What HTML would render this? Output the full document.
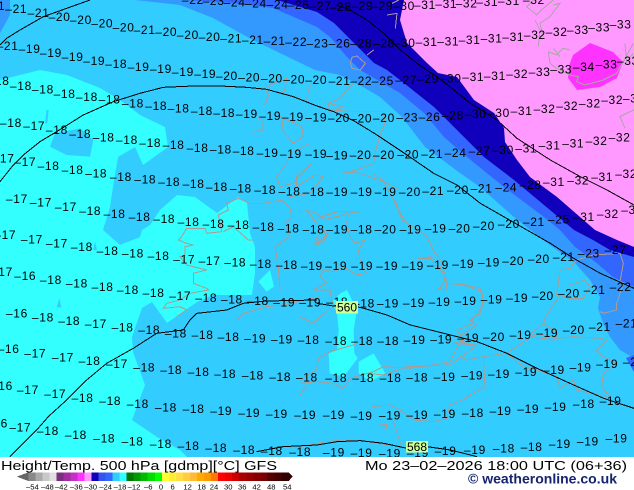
<!DOCTYPE html>
<html><head><meta charset="utf-8"><title>Height/Temp. 500 hPa</title>
<style>
html,body{margin:0;padding:0;background:#fff;width:634px;height:490px;overflow:hidden}
svg{display:block;position:absolute;left:0;top:0}
text{font-family:"Liberation Sans",sans-serif;fill:#000}
.l text{font-size:36px;letter-spacing:2px}
.c polyline{fill:none;stroke:#aa9c94;stroke-width:3}
.p polyline{fill:none;stroke:#aaa6a6;stroke-width:3}
.k polyline{fill:none;stroke:#000;stroke-width:3}
</style></head>
<body>
<svg width="634" height="490" viewBox="0 0 634 490" xmlns="http://www.w3.org/2000/svg">
<defs><clipPath id="m"><rect x="0" y="0" width="634" height="457"/></clipPath></defs>
<g clip-path="url(#m)">
<rect width="634" height="457" fill="#33ccff"/>
<!-- cyan -->
<polygon fill="#33ffff" points="0,80 40,70 67,75 100,88 120,100 140,115 165,127 168,147 143,165 135,147 118,157 113,187 110,207 103,230 120,245 140,237 142,230 150,225 160,210 177,195 195,197 217,213 238,197 247,203 250,233 255,247 255,273 252,295 213,295 197,302 167,323 152,302 142,308 132,337 133,352 145,385 132,420 157,437 180,450 187,457 0,457"/>
<g transform="scale(.3333)" fill="#33ccff">
<polygon points="150,440 165,400 240,385 280,420 270,470 200,465"/>
<polygon points="135,370 140,330 146,330 142,370"/>
</g>
<g transform="translate(0,230) scale(.3333)" fill="#33ccff">
<polygon points="170,232 178,205 184,232"/>
<polygon points="280,60 285,35 291,60"/>
</g>
<g transform="translate(0,230) scale(.3333)"><polygon fill="#33ffff" points="775,155 810,120 822,170 800,185"/></g>
<g transform="translate(317,230) scale(.3333)" fill="#33ffff">
<polygon points="45,215 70,190 90,180 120,240 110,300 112,370 122,385 80,440 38,430 35,370 60,360 65,300 60,250"/>
<polygon points="125,395 170,370 205,430 160,455 125,430"/>
</g>
<!-- blue bands -->
<polygon fill="#3399ff" points="135,0 180,5 213,18 253,40 315,70 340,75 363,87 380,97 402,117 425,147 460,173 480,187 514,217 543,240 575,263 590,280 600,297 598,308 603,323 610,337 620,350 634,358 634,0"/>
<polygon fill="#3399ff" points="0,0 10,0 10,15 0,33"/>
<polygon fill="#3366ff" points="187,0 233,3 273,8 317,27 330,37 347,57 360,70 400,93 424,113 444,137 467,157 504,187 544,217 560,230 575,247 593,260 613,277 634,287 634,0"/>
<polygon fill="#3366ff" points="634,355 626,358 634,372"/>
<polygon fill="#1100bb" points="277,0 317,12 334,23 354,43 374,63 387,70 400,80 434,107 457,130 484,157 514,180 550,210 574,230 593,240 610,250 634,257 634,0"/>
<polygon fill="#ff99ff" points="404,0 400,20 407,43 427,63 438,73 457,77 474,100 494,113 504,128 505,142 517,160 530,177 557,197 595,230 617,240 634,247 634,0"/>
<polygon fill="#ff33ff" points="570,63 573,55 590,43 613,52 623,62 617,78 600,87 577,90 568,78"/>

<!-- coastlines -->
<g shape-rendering="crispEdges">
<g class="c" transform="translate(230,70) scale(.3333)">
<polyline points="105,105 115,75 105,55 130,40 170,25 165,60 155,70 200,85 230,90 235,60 245,40"/>
<polyline points="300,130 295,100 330,85 350,60 370,40"/>
<polyline points="305,120 370,125 460,125 465,160 450,195 440,230 430,280 380,300 340,310"/>
<polyline points="430,310 470,340 510,360"/>
<polyline points="85,145 100,150 98,180 85,180 72,190"/>
<polyline points="150,140 215,170 220,200 190,220 160,185 155,140"/>
<polyline points="240,220 180,250 170,280 140,320 150,350 190,340 245,280"/>
<polyline points="245,280 200,320 200,350 255,315 280,320 240,370 180,380"/>
</g>
<g class="c" transform="translate(150,190) scale(.3333)">
<polyline points="205,75 235,60 230,40 265,25 300,40 340,40 395,30 420,55 425,80 405,100 420,140 390,160 375,170 385,230 390,300"/>
<polyline points="205,75 215,125 170,130 165,115 110,115 95,140 85,150 110,160 130,165 105,170 105,195 90,200 110,225 170,240 130,250 130,280 170,295 175,300 120,310 90,330 50,340 40,355 90,350 110,360 80,380"/>
<polyline points="220,125 250,110 295,150 310,150"/>
<polyline points="470,60 500,100"/>
<polyline points="490,160 510,130"/>
<polyline points="260,390 280,370 350,350 400,345 510,320"/>
</g>
<g class="c" transform="translate(300,200) scale(.3333)">
<polyline points="15,30 50,40 70,60 130,45 140,35 180,35 145,40 140,70 150,110 165,130 195,120 175,150 180,180 200,220 170,225 130,200 100,215 70,210 60,230 80,250 40,270 90,270 95,300 105,320"/>
<polyline points="45,130 85,100 70,125 50,135 45,130"/>
<polyline points="285,0 295,30 320,70 350,85 380,110 405,160 430,190 420,200 435,240 420,265"/>
<polyline points="355,175 395,170 405,180"/>
<polyline points="0,350 40,370 90,325"/>
</g>
<g class="c" transform="translate(317,230) scale(.3333)">
<polyline points="390,160 440,165 495,185 500,225 465,270 470,280 420,300 440,330 410,340 480,345 400,405 270,410 200,435 150,430"/>
<polyline points="300,85 340,85 360,110 385,130 390,180 360,175"/>
<polyline points="0,40 30,20 20,0"/>
</g>
<g class="c" transform="translate(300,325) scale(.3333)">
<polyline points="0,165 50,135 55,100 90,80 160,60 170,55"/>
<polyline points="0,175 50,170 100,175 130,190 150,160 220,140 250,125 330,130 400,120 450,110 480,50 510,60"/>
<polyline points="0,210 20,180"/>
<polyline points="240,300 262,298 258,310 242,306"/>
<polyline points="215,245 270,240 300,255 280,290 305,365"/>
<polyline points="300,255 340,285 400,290 440,280 450,240 510,215"/>
<polyline points="0,365 80,350 130,345 200,350 300,365"/>
</g>
<g class="c" transform="translate(460,240) scale(.3333)">
<polyline points="0,130 60,145 70,180 60,220 30,240 50,255 0,290"/>
<polyline points="290,165 300,90 330,85 350,60 400,45 480,40 490,70 480,125 490,130 470,190 470,210 430,220 420,215"/>
<polyline points="330,135 375,120 390,140 370,175 330,175 300,165"/>
<polyline points="250,250 260,225 300,165"/>
<polyline points="210,285 250,250 295,280 280,300 215,290"/>
<polyline points="0,350 20,360 70,350 140,340 200,300 230,280 290,295 340,290 420,295 440,300 410,330 430,350 470,370 430,400 425,440 450,470"/>
<polyline points="140,340 190,380 230,390 290,410 300,445 340,420 350,450 440,470"/>
<polyline points="70,350 75,440 20,470"/>
<polyline points="0,300 15,310 30,300"/>
</g>
<g class="c" transform="translate(317,0) scale(.3333)">
<polyline points="100,190 105,172 120,168 145,190 130,210 105,205 100,190"/>
<polyline points="150,165 170,150"/>
<polyline points="210,45 240,40 235,85"/>
<polyline points="225,10 245,0"/>
<polyline points="35,310 75,320 40,335"/>
<polyline points="75,515 130,520 200,545 235,610 260,670"/>
<polyline points="0,655 60,635 130,635"/>
</g>
<g class="p" transform="translate(470,0) scale(.3333)">
<polyline points="190,0 170,20 200,45 220,25 250,0"/>
<polyline points="195,60 210,90 205,140"/>
<polyline points="250,15 270,10 240,50 210,70 220,110"/>
<polyline points="235,155 240,190 260,205 300,225 325,230 320,245 345,255 400,240 440,220 460,185 490,130"/>
<polyline points="235,155 260,165 280,145 300,150"/>
<polyline points="250,145 270,170"/>
<polyline points="465,385 450,350 480,335 492,330"/>
<polyline points="465,130 470,185 490,160"/>
</g>
</g>

<!-- contours -->
<g shape-rendering="crispEdges">
<g class="k" transform="scale(.3333)">
<polyline points="0,135 20,115 60,90 130,50 200,25 270,0"/>
<polyline points="0,545 40,495 70,465 120,425 170,395 250,345 340,305 420,280 490,262 580,258 660,258 740,262 800,268 880,290 951,318"/>
</g>
<g class="k" transform="translate(317,0) scale(.3333)">
<polyline points="0,318 50,335 110,362 180,405 270,465 350,520 420,555 490,610 560,650 630,690"/>
<polyline points="55,15 90,25 150,60 200,100 250,150 300,190 380,245 460,310 540,360 600,415 700,480 790,530 870,570 951,615"/>
</g>
<g class="k" transform="translate(317,230) scale(.3333)">
<polyline points="630,0 700,40 770,85 850,130 951,175"/>
<polyline points="0,220 50,228 130,232 210,255 280,285 420,320 480,335 570,370 660,415 770,465 860,505 951,535"/>
<polyline points="0,645 60,635 130,632 200,640 270,655 330,650 400,660 480,680"/>
</g>
<g class="k" transform="translate(0,230) scale(.3333)">
<polyline points="30,680 110,600 145,560 200,510 260,450 320,400 400,355 470,310 550,300 570,270 590,250 680,240 730,220 800,213 951,210"/>
<polyline points="770,665 850,650 951,645"/>
</g>
</g>

<!-- temperature labels -->
<g class="l" transform="translate(-7.4,4.2) scale(.3333)">
<text x="568" y="0">–22</text><text x="630" y="3">–23</text><text x="693" y="7">–24</text><text x="757" y="10">–24</text><text x="822" y="13">–24</text><text x="885" y="15">–26</text>
<text x="-28" y="17">–21</text><text x="38" y="27">–21</text><text x="105" y="38">–21</text><text x="168" y="50">–20</text><text x="232" y="60">–20</text><text x="296" y="70">–20</text><text x="360" y="82">–20</text><text x="423" y="90">–21</text><text x="488" y="95">–20</text><text x="553" y="105">–20</text><text x="618" y="110">–20</text><text x="683" y="115">–21</text><text x="748" y="120">–21</text><text x="813" y="122">–21</text><text x="878" y="125">–22</text><text x="942" y="130">–23</text>
<text x="12" y="138">–21</text><text x="78" y="147">–19</text><text x="142" y="158">–19</text><text x="207" y="170">–19</text><text x="272" y="182">–19</text><text x="338" y="192">–18</text><text x="405" y="200">–19</text><text x="472" y="207">–19</text><text x="538" y="215">–19</text><text x="605" y="222">–19</text><text x="670" y="228">–20</text><text x="737" y="232">–20</text><text x="805" y="235">–20</text><text x="872" y="238">–20</text><text x="938" y="240">–20</text>
<text x="-15" y="243">–18</text><text x="52" y="257">–18</text><text x="118" y="268">–18</text><text x="183" y="282">–18</text><text x="250" y="290">–18</text><text x="318" y="298">–18</text><text x="388" y="310">–18</text><text x="458" y="318">–18</text><text x="525" y="325">–18</text><text x="595" y="333">–18</text><text x="662" y="338">–18</text><text x="730" y="342">–19</text><text x="800" y="347">–19</text><text x="868" y="350">–19</text><text x="938" y="352">–19</text>
<text x="22" y="368">–18</text><text x="92" y="378">–17</text><text x="160" y="390">–18</text><text x="230" y="402">–18</text><text x="300" y="412">–18</text><text x="370" y="420">–18</text><text x="440" y="428">–18</text><text x="510" y="435">–18</text><text x="582" y="443">–18</text><text x="652" y="448">–18</text><text x="720" y="452">–18</text><text x="792" y="458">–19</text><text x="862" y="462">–19</text><text x="938" y="462">–19</text>
<text x="0" y="475">–17</text><text x="65" y="485">–17</text><text x="135" y="498">–18</text><text x="207" y="510">–18</text><text x="278" y="520">–18</text><text x="352" y="530">–18</text><text x="425" y="538">–18</text><text x="497" y="545">–18</text><text x="570" y="552">–18</text><text x="640" y="560">–18</text><text x="712" y="565">–18</text><text x="785" y="570">–18</text><text x="858" y="574">–18</text><text x="930" y="575">–18</text>
<text x="40" y="597">–17</text><text x="112" y="607">–17</text><text x="187" y="620">–17</text><text x="260" y="632">–18</text><text x="333" y="642">–18</text><text x="408" y="650">–18</text><text x="482" y="657">–18</text><text x="555" y="665">–18</text><text x="630" y="672">–18</text><text x="705" y="675">–18</text><text x="780" y="680">–18</text><text x="855" y="685">–18</text><text x="930" y="688">–18</text>
</g>
<g class="l" transform="translate(309.6,4.2) scale(.3333)">
<text x="0" y="18">–27</text><text x="60" y="20">–28</text><text x="125" y="18">–29</text><text x="185" y="17">–29</text><text x="250" y="17">–30</text><text x="313" y="15">–31</text><text x="377" y="12">–31</text><text x="438" y="10">–32</text><text x="500" y="5">–31</text><text x="565" y="3">–31</text><text x="640" y="0">–32</text>
<text x="57" y="130">–26</text><text x="122" y="130">–28</text><text x="190" y="130">–28</text><text x="252" y="128">–30</text><text x="318" y="125">–31</text><text x="383" y="124">–31</text><text x="447" y="120">–31</text><text x="513" y="115">–31</text><text x="578" y="110">–31</text><text x="643" y="105">–32</text><text x="708" y="95">–32</text><text x="772" y="90">–33</text><text x="836" y="82">–33</text><text x="900" y="73">–33</text>
<text x="57" y="242">–21</text><text x="122" y="243">–22</text><text x="187" y="243">–25</text><text x="257" y="240">–27</text><text x="322" y="237">–29</text><text x="390" y="235">–30</text><text x="458" y="230">–31</text><text x="523" y="228">–31</text><text x="590" y="222">–32</text><text x="657" y="216">–33</text><text x="722" y="208">–33</text><text x="790" y="201">–34</text><text x="858" y="193">–33</text><text x="922" y="182">–33</text>
<text x="55" y="353">–20</text><text x="122" y="355">–20</text><text x="190" y="353">–20</text><text x="260" y="352">–23</text><text x="327" y="350">–26</text><text x="397" y="346">–28</text><text x="465" y="342">–30</text><text x="535" y="338">–30</text><text x="603" y="333">–31</text><text x="672" y="327">–32</text><text x="740" y="318">–32</text><text x="808" y="310">–32</text><text x="875" y="300">–32</text><text x="940" y="295">–32</text>
<text x="50" y="466">–19</text><text x="120" y="465">–20</text><text x="190" y="465">–20</text><text x="263" y="463">–20</text><text x="335" y="462">–21</text><text x="405" y="458">–24</text><text x="477" y="453">–27</text><text x="547" y="450">–30</text><text x="617" y="445">–31</text><text x="687" y="436">–31</text><text x="758" y="430">–31</text><text x="828" y="422">–32</text><text x="897" y="412">–32</text>
<text x="50" y="576">–19</text><text x="123" y="576">–19</text><text x="195" y="576">–19</text><text x="268" y="575">–20</text><text x="338" y="573">–21</text><text x="412" y="570">–20</text><text x="483" y="565">–21</text><text x="557" y="562">–24</text><text x="630" y="555">–28</text><text x="700" y="545">–31</text><text x="773" y="541">–32</text><text x="845" y="530">–31</text><text x="917" y="522">–32</text>
<text x="50" y="688">–19</text><text x="123" y="688">–18</text><text x="195" y="688">–20</text><text x="270" y="688">–19</text><text x="345" y="685">–19</text><text x="417" y="685">–20</text><text x="490" y="677">–20</text><text x="565" y="672">–20</text><text x="640" y="665">–21</text><text x="715" y="658">–25</text><text x="790" y="650">–31</text><text x="862" y="642">–32</text><text x="935" y="630">–32</text>
</g>
<g class="l" transform="translate(-7.4,234.2) scale(.3333)">
<text x="5" y="15">–17</text><text x="85" y="28">–17</text><text x="160" y="40">–17</text><text x="235" y="50">–18</text><text x="312" y="62">–18</text><text x="388" y="70">–18</text><text x="465" y="78">–18</text><text x="542" y="88">–17</text><text x="618" y="93">–17</text><text x="695" y="97">–18</text><text x="772" y="101">–18</text><text x="850" y="105">–18</text><text x="925" y="108">–19</text>
<text x="-5" y="125">–17</text><text x="65" y="138">–16</text><text x="142" y="150">–18</text><text x="220" y="160">–18</text><text x="297" y="170">–18</text><text x="373" y="180">–18</text><text x="450" y="188">–18</text><text x="530" y="197">–17</text><text x="608" y="204">–18</text><text x="685" y="208">–18</text><text x="763" y="212">–18</text><text x="842" y="217">–19</text><text x="920" y="217">–19</text>
<text x="40" y="250">–16</text><text x="118" y="262">–18</text><text x="197" y="272">–18</text><text x="277" y="282">–17</text><text x="357" y="292">–18</text><text x="437" y="300">–18</text><text x="517" y="310">–18</text><text x="597" y="315">–18</text><text x="675" y="320">–18</text><text x="755" y="325">–19</text><text x="835" y="328">–19</text><text x="915" y="330">–18</text>
<text x="15" y="357">–16</text><text x="95" y="370">–17</text><text x="178" y="382">–17</text><text x="258" y="393">–18</text><text x="340" y="402">–17</text><text x="422" y="412">–18</text><text x="503" y="420">–18</text><text x="585" y="425">–18</text><text x="665" y="431">–18</text><text x="748" y="436">–18</text><text x="830" y="440">–18</text><text x="910" y="442">–18</text>
<text x="-5" y="468">–16</text><text x="73" y="480">–17</text><text x="155" y="492">–17</text><text x="237" y="503">–18</text><text x="320" y="512">–18</text><text x="403" y="522">–18</text><text x="487" y="532">–18</text><text x="570" y="537">–18</text><text x="653" y="543">–19</text><text x="737" y="548">–19</text><text x="820" y="551">–19</text><text x="905" y="554">–19</text>
<text x="-20" y="580">–16</text><text x="50" y="592">–17</text><text x="133" y="603">–18</text><text x="217" y="614">–18</text><text x="302" y="625">–18</text><text x="387" y="634">–18</text><text x="472" y="642">–18</text><text x="555" y="648">–18</text><text x="638" y="654">–18</text><text x="722" y="660">–18</text><text x="805" y="663">–18</text><text x="890" y="665">–18</text>
</g>
<g class="l" transform="translate(309.6,234.2) scale(.3333)">
<text x="47" y="108">–19</text><text x="125" y="108">–19</text><text x="200" y="108">–19</text><text x="277" y="108">–19</text><text x="352" y="105">–19</text><text x="428" y="102">–19</text><text x="505" y="97">–19</text><text x="578" y="92">–20</text><text x="655" y="87">–20</text><text x="730" y="80">–21</text><text x="805" y="70">–23</text><text x="885" y="60">–27</text>
<text x="50" y="215">–18</text><text x="130" y="220">–18</text><text x="202" y="220">–19</text><text x="280" y="218">–19</text><text x="357" y="215">–19</text><text x="435" y="212">–19</text><text x="513" y="208">–19</text><text x="590" y="203">–19</text><text x="667" y="197">–20</text><text x="745" y="190">–20</text><text x="822" y="180">–21</text><text x="900" y="170">–22</text>
<text x="47" y="333">–18</text><text x="125" y="333">–18</text><text x="203" y="333">–18</text><text x="282" y="330">–19</text><text x="362" y="328">–19</text><text x="443" y="323">–19</text><text x="520" y="320">–20</text><text x="600" y="315">–19</text><text x="680" y="308">–19</text><text x="760" y="300">–20</text><text x="838" y="290">–21</text><text x="918" y="280">–21</text>
<text x="47" y="443">–18</text><text x="128" y="443">–18</text><text x="210" y="443">–18</text><text x="290" y="442">–18</text><text x="372" y="440">–19</text><text x="455" y="436">–19</text><text x="535" y="432">–19</text><text x="617" y="425">–19</text><text x="700" y="420">–19</text><text x="780" y="412">–19</text><text x="860" y="402">–19</text><text x="940" y="395">–20</text>
<text x="40" y="555">–19</text><text x="123" y="557">–19</text><text x="208" y="556">–19</text><text x="290" y="555">–19</text><text x="373" y="551">–19</text><text x="457" y="548">–18</text><text x="540" y="542">–19</text><text x="623" y="536">–19</text><text x="705" y="530">–19</text><text x="790" y="522">–18</text><text x="870" y="512">–19</text>
<text x="40" y="667">–19</text><text x="123" y="669">–19</text><text x="208" y="670">–19</text><text x="292" y="668">–19</text><text x="375" y="663">–19</text><text x="463" y="660">–19</text><text x="550" y="655">–18</text><text x="633" y="650">–18</text><text x="718" y="642">–19</text><text x="802" y="634">–19</text><text x="888" y="625">–19</text>
</g>

<!-- height labels -->
<rect x="336" y="301" width="22" height="12.5" fill="#ccff99"/>
<text x="337" y="311.5" font-size="12">560</text>
<rect x="406" y="441" width="22" height="11.5" fill="#ccff99"/>
<text x="407" y="451" font-size="12">568</text>
</g>

<!-- legend -->
<rect x="0" y="457" width="634" height="33" fill="#fff"/>
<text x="1" y="470" font-size="13" textLength="276" lengthAdjust="spacingAndGlyphs">Height/Temp. 500 hPa [gdmp][°C] GFS</text>
<text x="365" y="470" font-size="13" textLength="262" lengthAdjust="spacingAndGlyphs">Mo 23–02–2026 18:00 UTC (06+36)</text>
<text x="468" y="483.5" font-size="13.5" font-weight="700" style="fill:#14246e" textLength="149" lengthAdjust="spacingAndGlyphs">© weatheronline.co.uk</text>

<g transform="translate(0,450) scale(.3333)" shape-rendering="crispEdges">
<polygon points="50,80 85,67 85,93" fill="#666"/>
<rect x="85" y="67" width="22" height="26" fill="#888"/><rect x="106" y="67" width="22" height="26" fill="#aaa"/><rect x="127" y="67" width="22" height="26" fill="#c8c8c8"/><rect x="148" y="67" width="22" height="26" fill="#e0e0e0"/><rect x="169" y="67" width="22" height="26" fill="#7a2f7f"/><rect x="190" y="67" width="22" height="26" fill="#a030a0"/><rect x="211" y="67" width="22" height="26" fill="#c432c4"/><rect x="233" y="67" width="22" height="26" fill="#ff33ff"/><rect x="254" y="67" width="22" height="26" fill="#ff99ff"/><rect x="275" y="67" width="22" height="26" fill="#1100bb"/><rect x="296" y="67" width="22" height="26" fill="#3355ee"/><rect x="317" y="67" width="22" height="26" fill="#3366ff"/><rect x="338" y="67" width="22" height="26" fill="#33ccff"/><rect x="359" y="67" width="22" height="26" fill="#33ffff"/>
<rect x="380" y="67" width="22" height="26" fill="#007700"/><rect x="401" y="67" width="22" height="26" fill="#009900"/><rect x="422" y="67" width="22" height="26" fill="#00bb00"/><rect x="443" y="67" width="22" height="26" fill="#00dd00"/><rect x="465" y="67" width="22" height="26" fill="#00ff00"/>
<rect x="486" y="67" width="22" height="26" fill="#ffff33"/><rect x="507" y="67" width="22" height="26" fill="#ffee33"/><rect x="528" y="67" width="22" height="26" fill="#ffdd44"/><rect x="549" y="67" width="22" height="26" fill="#ffcc44"/><rect x="570" y="67" width="22" height="26" fill="#ffbb33"/><rect x="591" y="67" width="22" height="26" fill="#ffaa00"/><rect x="612" y="67" width="22" height="26" fill="#ff9900"/><rect x="633" y="67" width="22" height="26" fill="#ff7700"/>
<rect x="654" y="67" width="22" height="26" fill="#ff0000"/><rect x="675" y="67" width="22" height="26" fill="#ee0000"/><rect x="696" y="67" width="22" height="26" fill="#cc0000"/><rect x="717" y="67" width="22" height="26" fill="#aa0000"/><rect x="739" y="67" width="22" height="26" fill="#990000"/><rect x="760" y="67" width="22" height="26" fill="#880000"/><rect x="781" y="67" width="22" height="26" fill="#770000"/><rect x="802" y="67" width="22" height="26" fill="#550000"/><rect x="823" y="67" width="22" height="26" fill="#440000"/><rect x="844" y="67" width="22" height="26" fill="#330000"/>
<polygon points="866,67 878,80 866,93" fill="#330000"/>
</g>
<g transform="translate(0,450) scale(.3333)" text-anchor="middle" font-size="23">
<text x="97" y="118">–54</text><text x="142" y="118">–48</text><text x="184" y="118">–42</text><text x="229" y="118">–36</text><text x="272" y="118">–30</text><text x="317" y="118">–24</text><text x="360" y="118">–18</text><text x="402" y="118">–12</text><text x="445" y="118">–6</text><text x="483" y="118">0</text><text x="518" y="118">6</text><text x="563" y="118">12</text><text x="605" y="118">18</text><text x="642" y="118">24</text><text x="685" y="118">30</text><text x="727" y="118">36</text><text x="770" y="118">42</text><text x="814" y="118">48</text><text x="862" y="118">54</text>
</g>
</svg>
</body></html>
